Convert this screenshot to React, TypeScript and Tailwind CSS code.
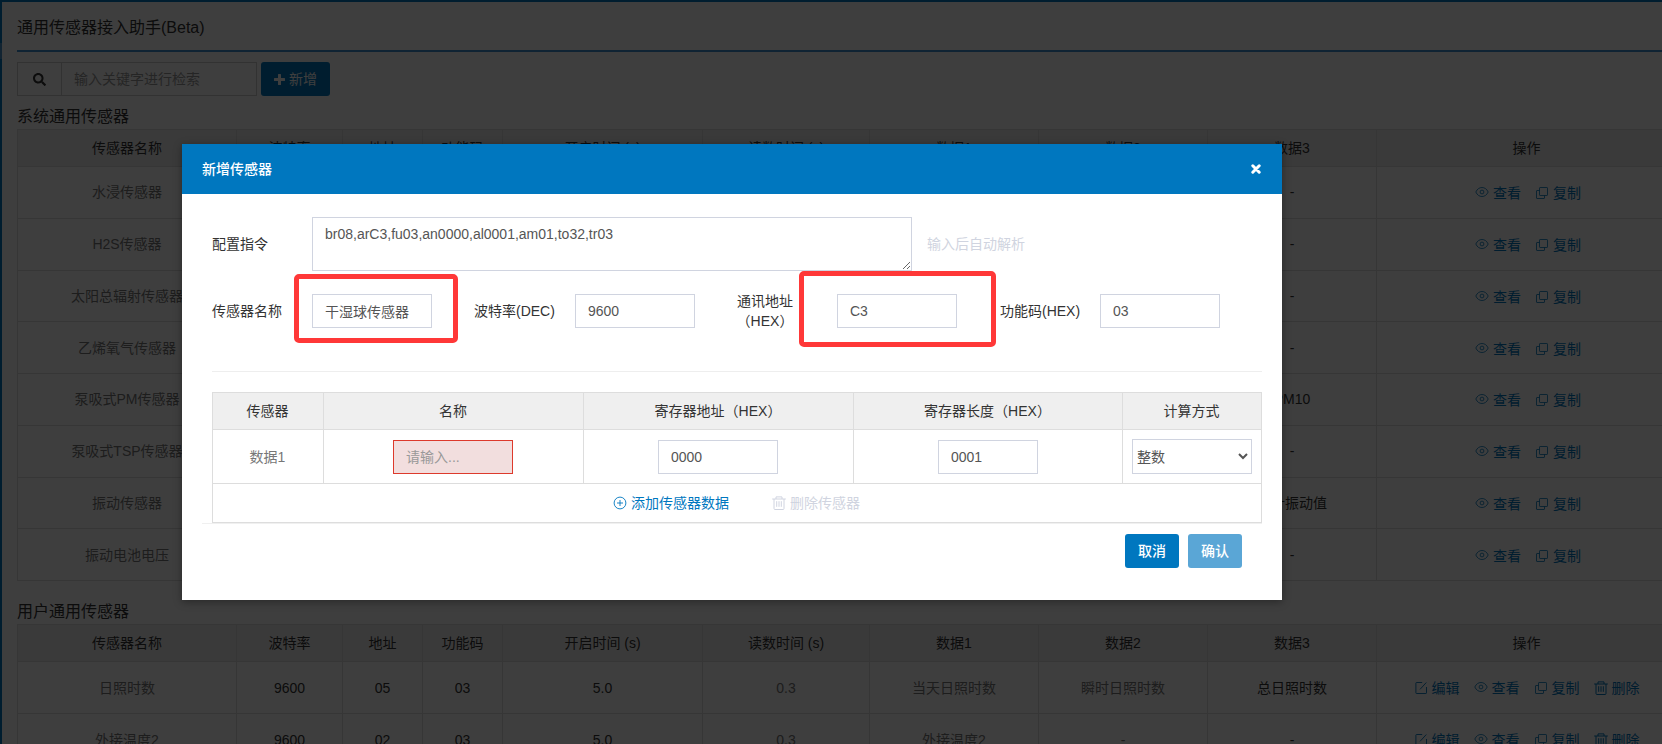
import React from "react";
import { FaSearch } from "react-icons/fa";

type Row = {
  name: string;
  cells: string[];
};

const columns = ["传感器名称", "波特率", "地址", "功能码", "开启时间 (s)", "读数时间 (s)", "数据1", "数据2", "数据3", "操作"];

const systemRows: Row[] = [
  { name: "水浸传感器", cells: ["9600", "01", "03", "5.0", "0.3", "水浸", "-", "-"] },
  { name: "H2S传感器", cells: ["9600", "02", "03", "5.0", "0.3", "H2S", "-", "-"] },
  { name: "太阳总辐射传感器", cells: ["9600", "03", "03", "5.0", "0.3", "辐射", "-", "-"] },
  { name: "乙烯氧气传感器", cells: ["9600", "04", "03", "5.0", "0.3", "乙烯", "氧气", "-"] },
  { name: "泵吸式PM传感器", cells: ["9600", "05", "03", "5.0", "0.3", "PM1.0", "PM2.5", "PM10"] },
  { name: "泵吸式TSP传感器", cells: ["9600", "06", "03", "5.0", "0.3", "TSP", "-", "-"] },
  { name: "振动传感器", cells: ["9600", "07", "03", "5.0", "0.3", "振动值", "-", "累计振动值"] },
  { name: "振动电池电压", cells: ["9600", "08", "03", "5.0", "0.3", "电压", "-", "-"] },
];

const userRows: Row[] = [
  { name: "日照时数", cells: ["9600", "05", "03", "5.0", "0.3", "当天日照时数", "瞬时日照时数", "总日照时数"] },
  { name: "外接温度2", cells: ["9600", "02", "03", "5.0", "0.3", "外接温度2", "-", "-"] },
];

const EyeIcon = () => (
  <svg className="relative -top-px" width="14" height="14" viewBox="0 0 14 14" fill="none" stroke="currentColor" strokeWidth="0.8">
    <path d="M0.8 7C2.2 4 4.4 2.5 7 2.5S11.8 4 13.2 7C11.8 10 9.6 11.5 7 11.5S2.2 10 0.8 7Z" />
    <circle cx="7" cy="7" r="1.9" />
  </svg>
);

const CopyIcon = () => (
  <svg width="14" height="14" viewBox="0 0 14 14" fill="none" stroke="currentColor" strokeWidth="0.8">
    <rect x="4.5" y="1.5" width="8" height="8" rx="0.6" />
    <path d="M4.5 4.5H2a.5.5 0 0 0-.5.5v7a.5.5 0 0 0 .5.5h7a.5.5 0 0 0 .5-.5V9.5" />
  </svg>
);

const EditIcon = () => (
  <svg width="14" height="14" viewBox="0 0 14 14" fill="none" stroke="currentColor" strokeWidth="0.9">
    <path d="M8.2 1.5H2.5a.6.6 0 0 0-.6.6v9.8a.6.6 0 0 0 .6.6h9.4a.6.6 0 0 0 .6-.6V6M6 8.4l6.3-6.9" />
  </svg>
);

const TrashIcon = () => (
  <svg width="14" height="14" viewBox="0 0 14 14" fill="none" stroke="currentColor" strokeWidth="1">
    <path d="M0.2 3h13.6M4 3V.9h6V3M2 3v9.5a1 1 0 0 0 1 1h8a1 1 0 0 0 1-1V3M4.7 5.2v5.6M7 5.2v5.6M9.3 5.2v5.6" />
  </svg>
);

const PlusCircleIcon = () => (
  <svg width="14" height="14" viewBox="0 0 14 14" fill="none" stroke="currentColor" strokeWidth="0.9">
    <circle cx="7" cy="7" r="5.9" />
    <path d="M7 4v6M4 7h6" />
  </svg>
);

const PlusIcon = () => (
  <svg width="11" height="11" viewBox="0 0 11 11" fill="currentColor">
    <path d="M4.6 0h1.8a.6.6 0 0 1 .6.6V4h3.4a.6.6 0 0 1 .6.6v1.8a.6.6 0 0 1-.6.6H7v3.4a.6.6 0 0 1-.6.6H4.6a.6.6 0 0 1-.6-.6V7H.6a.6.6 0 0 1-.6-.6V4.6A.6.6 0 0 1 .6 4H4V.6a.6.6 0 0 1 .6-.6Z" />
  </svg>
);

const CloseIcon = () => (
  <svg width="10" height="10" viewBox="0 0 10 10" fill="none" stroke="currentColor" strokeWidth="3" strokeLinecap="round">
    <path d="M1.8 1.8l6.4 6.4M8.2 1.8L1.8 8.2" />
  </svg>
);

const Action = ({ icon, label }: { icon: React.ReactNode; label: string }) => (
  <a className="flex items-center gap-1 text-[#0077bf]">
    {icon}
    <span>{label}</span>
  </a>
);

const SensorTable = ({ rows, editable }: { rows: Row[]; editable?: boolean }) => {
  const grid = "grid grid-cols-[219px_106px_80px_80px_200px_167px_169px_169px_169px_300px]";
  const cell = "flex items-center justify-center border-r border-b border-[#ddd]";
  const pad = editable ? "pt-[2px]" : "";

  return (
    <div className="w-[1660px] border-t border-l border-[#ddd]">
      <div className={`${grid} h-[37px] bg-[#efefef] text-[#333]`}>
        {columns.map((c) => (
          <div key={c} className={cell}>{c}</div>
        ))}
      </div>
      {rows.map((row) => (
        <div key={row.name} className={`${grid} h-[51.75px] text-[#333]`}>
          <div className={`${cell} ${pad} text-[#777]`}>{row.name}</div>
          {row.cells.map((value, i) => (
            <div key={i} className={`${cell} ${pad} ${i > 3 && i < 7 ? "text-[#777]" : ""}`}>{value}</div>
          ))}
          <div className={`${cell} gap-[14px] pt-[2px] ${editable ? "" : "pl-[3px]"}`}>
            {editable && <Action icon={<EditIcon />} label="编辑" />}
            <Action icon={<EyeIcon />} label="查看" />
            <Action icon={<CopyIcon />} label="复制" />
            {editable && <Action icon={<TrashIcon />} label="删除" />}
          </div>
        </div>
      ))}
    </div>
  );
};

const Field = ({ value, className = "" }: { value: string; className?: string }) => (
  <input
    className={`h-[34px] border border-[#d0d4e0] bg-white px-3 text-[#555] outline-none ${className}`}
    defaultValue={value}
  />
);

const SensorModal = () => (
  <div className="absolute left-[182px] top-[144px] h-[456px] w-[1100px] bg-white text-[#333] shadow-[0_2px_8px_rgba(0,0,0,0.35)]">
    <div className="flex h-[50px] items-center justify-between bg-[#0077bf] pb-px pl-5 pr-[21px] text-white">
      <h4 className="font-medium">新增传感器</h4>
      <CloseIcon />
    </div>

    <div className="px-[30px]">
      <div className="flex h-[77px] items-end">
        <label className="w-[100px] pb-[17px]">配置指令</label>
        <textarea
          className="h-[54px] w-[600px] resize border border-[#d0d4e0] px-3 py-[6px] leading-5 text-[#555] outline-none"
          defaultValue="br08,arC3,fu03,an0000,al0001,am01,to32,tr03"
        />
        <span className="pb-[17px] pl-[15px] text-[#d0d4e0]">输入后自动解析</span>
      </div>

      <div className="mt-[13px] flex h-[54px] items-center">
        <label className="w-[100px]">传感器名称</label>
        <Field value="干湿球传感器" className="w-[120px]" />
        <label className="ml-[42px] w-[101px]">波特率(DEC)</label>
        <Field value="9600" className="w-[120px]" />
        <label className="ml-[25px] w-[90px] text-center leading-5">通讯地址（HEX）</label>
        <Field value="C3" className="ml-[27px] w-[120px]" />
        <label className="ml-[43px] w-[100px]">功能码(HEX)</label>
        <Field value="03" className="w-[120px]" />
      </div>

      <div className="mt-[33px] w-[1050px] border-t border-[#eee]" />

      <div className="mt-[20px] w-[1050px] border-t border-l border-[#ddd] text-center">
        <div className="grid h-[37px] grid-cols-[111px_260px_270px_269px_139px] bg-[#efefef]">
          {["传感器", "名称", "寄存器地址（HEX）", "寄存器长度（HEX）", "计算方式"].map((h) => (
            <div key={h} className="flex items-center justify-center border-r border-b border-[#ddd] pr-px">{h}</div>
          ))}
        </div>
        <div className="grid h-[54px] grid-cols-[111px_260px_270px_269px_139px]">
          <div className="flex items-center justify-center border-r border-b border-[#ddd] pr-px text-[#777]">数据1</div>
          <div className="flex items-center justify-center border-r border-b border-[#ddd] pr-px">
            <input
              className="h-[34px] w-[120px] border border-[#dd3a2c] bg-[#f2dede] px-3 outline-none placeholder:text-[#999]"
              placeholder="请输入..."
            />
          </div>
          <div className="flex items-center justify-center border-r border-b border-[#ddd] pr-px">
            <Field value="0000" className="w-[120px]" />
          </div>
          <div className="flex items-center justify-center border-r border-b border-[#ddd]">
            <Field value="0001" className="w-[100px]" />
          </div>
          <div className="flex items-center justify-center border-r border-b border-[#ddd]">
            <select className="h-[35px] w-[120px] border border-[#d0d4e0] bg-white text-[#555]">
              <option>整数</option>
            </select>
          </div>
        </div>
        <div className="flex h-[39px] items-center border-r border-b border-[#ddd] pl-[400px]">
          <a className="flex items-center gap-1 text-[#0077bf]">
            <PlusCircleIcon />
            添加传感器数据
          </a>
          <a className="ml-[43px] flex items-center gap-1 text-[#d0d4e0]">
            <TrashIcon />
            删除传感器
          </a>
        </div>
      </div>
    </div>

    <div className="mx-5 flex justify-end gap-[9px] border-t border-[#f0f0f0] pt-[10px] pr-5 font-medium text-white">
      <button className="h-[34px] w-[54px] rounded-[3px] bg-[#0077bf]">取消</button>
      <button className="h-[34px] w-[54px] rounded-[3px] bg-[#5aa6d6]">确认</button>
    </div>

    {/* highlight frames */}
    <div className="absolute left-[112px] top-[130px] h-[69px] w-[164px] rounded-[5px] border-[5px] border-[#ff3838]" />
    <div className="absolute left-[617px] top-[127px] h-[76px] w-[197px] rounded-[5px] border-[5px] border-[#ff3838]" />
  </div>
);

const App = () => {
  return (
    <div className="relative h-[744px] w-[1662px] overflow-hidden bg-white font-['Liberation_Sans','Noto_Sans_CJK_SC',sans-serif] text-sm text-[#333]">
      <div className="flex h-[744px] border-t-2 border-[#0077bf]">
        <div className="w-[2px] shrink-0 bg-[#0077bf] pt-[41px]">
          <div className="h-4 bg-[#4a96cc]" />
        </div>
        <main className="w-[1660px] shrink-0 pl-[15px]">
          <h1 className="flex h-[50px] w-[1660px] items-center border-b-2 border-[#3f8fd0] pt-[3px] text-base">
            通用传感器接入助手(Beta)
          </h1>

          <div className="mt-[10px] flex h-[34px]">
            <div className="flex w-[45px] items-center justify-center border border-[#ccc]">
              <FaSearch size={13} />
            </div>
            <input
              className="w-[195px] border border-l-0 border-[#ccc] px-3 outline-none placeholder:text-[#999]"
              placeholder="输入关键字进行检索"
            />
            <button className="ml-1 flex w-[69px] items-center justify-center gap-[4px] rounded-[3px] bg-[#0077bf] text-white">
              <PlusIcon />
              新增
            </button>
          </div>

          <h2 className="flex h-[33px] items-end text-base">系统通用传感器</h2>
          <SensorTable rows={systemRows} />
          <h2 className="flex h-[43px] items-end text-base">用户通用传感器</h2>
          <SensorTable rows={userRows} editable />
        </main>
      </div>

      <div className="absolute inset-0 bg-black/[0.757]" />
      <SensorModal />
    </div>
  );
};

export default App;
